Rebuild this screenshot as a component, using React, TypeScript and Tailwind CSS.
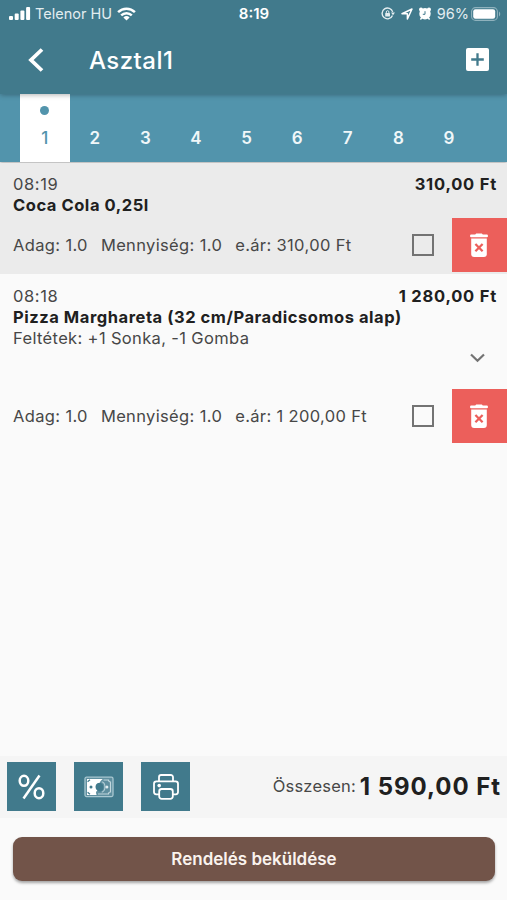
import { useState } from "react";
import type { ReactNode } from "react";

interface OrderItem {
  id: number;
  time: string;
  name: string;
  total: string;
  toppings?: string;
  portion: string;
  quantity: string;
  unitPrice: string;
}

const items: OrderItem[] = [
  {
    id: 1,
    time: "08:19",
    name: "Coca Cola 0,25l",
    total: "310,00 Ft",
    portion: "1.0",
    quantity: "1.0",
    unitPrice: "310,00 Ft",
  },
  {
    id: 2,
    time: "08:18",
    name: "Pizza Marghareta (32 cm/Paradicsomos alap)",
    total: "1 280,00 Ft",
    toppings: "+1 Sonka, -1 Gomba",
    portion: "1.0",
    quantity: "1.0",
    unitPrice: "1 200,00 Ft",
  },
];

const seats = [1, 2, 3, 4, 5, 6, 7, 8, 9];

function StatusBar() {
  return (
    <div className="flex h-[27px] items-center justify-between pl-[9px] pr-[7px] text-[15px] text-[#e3edf0]">
      <div className="flex w-[160px] items-center">
        <svg width="22" height="13" viewBox="0 0 22 13" fill="white">
          <rect x="0" y="9" width="4" height="4" rx="1" />
          <rect x="5.7" y="6.5" width="4" height="6.5" rx="1" />
          <rect x="11.4" y="3.5" width="4" height="9.5" rx="1" />
          <rect x="17.1" y="0" width="4" height="13" rx="1" />
        </svg>
        <span className="ml-1 whitespace-nowrap text-[14.5px]">Telenor HU</span>
        <svg className="ml-[5px]" width="19" height="14" viewBox="0 0 19 14" fill="none" stroke="white" strokeWidth="2.5">
          <path d="M1.1 5.1a12 12 0 0 1 16.8 0" />
          <path d="M4.2 8.3a7.6 7.6 0 0 1 10.6 0" />
          <path d="M9.5 13.6 6.4 10.5a4.5 4.5 0 0 1 6.2 0Z" fill="white" stroke="none" />
        </svg>
      </div>
      <span className="-ml-0.5 pt-0.5 font-semibold text-white">8:19</span>
      <div className="-mr-px flex w-[160px] items-center justify-end">
        <svg width="14" height="13" viewBox="0 0 14 13" fill="none" stroke="currentColor" strokeWidth="1.4">
          <path d="M11.5 8.5a5.4 5.4 0 1 1 .2-3.6" />
          <path d="M10 5.5h4l-2 2.8Z" fill="currentColor" stroke="none" />
          <rect x="4.2" y="5.9" width="4.8" height="3.6" rx=".5" fill="currentColor" stroke="none" />
          <path d="M5.3 6V5a1.3 1.3 0 0 1 2.6 0v1" strokeWidth="1" />
        </svg>
        <svg className="ml-1.5" width="12" height="12" viewBox="0 0 12 12" fill="none" stroke="white" strokeWidth="1.5" strokeLinejoin="round">
          <path d="M1 5.8 11 1 6.4 11V5.8Z" />
        </svg>
        <svg className="ml-1.5" width="12" height="13" viewBox="0 0 12 13" fill="white">
          <circle cx="6" cy="6.8" r="5.7" />
          <circle cx="2" cy="2.4" r="2" />
          <circle cx="10" cy="2.4" r="2" />
          <path d="m1.4 12.5 2-2.5M10.6 12.5l-2-2.5" stroke="white" strokeWidth="1.5" />
          <path d="M6 4.2v3.1H3.8" fill="none" stroke="#417a8c" strokeWidth="1" />
        </svg>
        <span className="ml-1.5 text-[14.5px]">96%</span>
        <svg className="ml-0.5" width="30" height="14" viewBox="0 0 30 14">
          <rect x=".6" y=".6" width="25.8" height="12.8" rx="4" fill="none" stroke="#8fb2bd" strokeWidth="1.1" />
          <rect x="2.2" y="2.2" width="22" height="9.6" rx="2.2" fill="white" />
          <path d="M28 4.5c1.6.8 1.6 4.2 0 5Z" fill="#8fb2bd" />
        </svg>
      </div>
    </div>
  );
}

function DeleteIcon() {
  return (
    <svg className="mr-px" width="20" height="24" viewBox="0 0 20 24">
      <path d="M6.2 1.6 7.2.6h5.6l1 1h4.1q1 0 1 1v1q0 .7-1 .7H2.1q-1 0-1-.7v-1q0-1 1-1Z" fill="white" />
      <path d="M2.2 5.4h15.6V21a3 3 0 0 1-3 3H5.2a3 3 0 0 1-3-3Z" fill="white" />
      <path d="m6.4 11 7.2 7.2M13.6 11l-7.2 7.2" stroke="#ec5f5b" strokeWidth="2.3" />
    </svg>
  );
}

function CashIcon() {
  return (
    <svg width="30" height="22" viewBox="0 0 30 22">
      <rect x="1" y="1.2" width="28" height="19.4" rx="1.5" fill="#5f8f9f" stroke="#a9c8d1" strokeWidth="1.3" />
      <path d="M3 3h15.8c-1 1.2-2.6 1.7-2.6 3 0 1.2-1.6 1.4-2.6 2.8-1.4 2-.6 4.2.2 5.2-1 1-1.8 1.6-1.8 3l.6 1.9H3Z" fill="white" />
      <path d="M3.6 5.8 6 3.8M3.6 16.2 6 18.2" stroke="#417a8c" strokeWidth="1.2" />
      <circle cx="7" cy="11" r="1.5" fill="#417a8c" />
      <path d="M12 8.8c1.6-3.2 6.8-2.8 7.4 1.6.4 4.6-3 6.2-5.8 4.4-2.1-1.3-2.6-4-1.6-6Z" fill="#417a8c" />
      <path d="M19.5 4h5a2 2 0 0 0 2 2v10a2 2 0 0 0-2 2H14" fill="none" stroke="#c2d8de" strokeWidth="1.2" />
      <path d="M17.8 5.8c4 1 4.4 9 0 10.4" fill="none" stroke="#b3ced6" strokeWidth="1.1" />
      <circle cx="22.9" cy="11" r="1.5" fill="#e1edf0" />
    </svg>
  );
}

function PrinterIcon() {
  return (
    <svg width="26" height="26" viewBox="0 0 26 26" fill="none" stroke="white" strokeWidth="1.8" strokeLinejoin="round">
      <path d="M6 7.3V3.2A2.2 2.2 0 0 1 8.2 1h9.6A2.2 2.2 0 0 1 20 3.2v4.1" />
      <path d="M6 20.3H3.2A2.2 2.2 0 0 1 1 18.1v-8.4a2.4 2.4 0 0 1 2.4-2.4h19.2A2.4 2.4 0 0 1 25 9.7v8.4a2.2 2.2 0 0 1-2.2 2.2H20" />
      <path d="M8.6 15h8.8a2.4 2.4 0 0 1 2.4 2.4v5a2.4 2.4 0 0 1-2.4 2.4H8.6a2.4 2.4 0 0 1-2.4-2.4v-5A2.4 2.4 0 0 1 8.6 15Z" />
      <circle cx="6.2" cy="11.6" r="1.8" fill="white" stroke="none" />
    </svg>
  );
}

function SquareButton({ label, children }: { label: string; children: ReactNode }) {
  return (
    <button aria-label={label} className="flex size-[49px] items-center justify-center bg-[#417a8c]">
      {children}
    </button>
  );
}

function ItemRow({ item, highlighted }: { item: OrderItem; highlighted: boolean }) {
  const [checked, setChecked] = useState(false);

  return (
    <div
      className={`pb-0.5 text-[16.5px] leading-[21px] tracking-[0.35px] text-[#474747] ${
        highlighted ? "bg-[#ebebeb] pt-[11px]" : "pt-3"
      }`}
    >
      <div className="pl-[13px] pr-[10px]">
        <div className="flex justify-between">
          <span className="tracking-[0.6px]">{item.time}</span>
          <span className="font-bold tracking-[0.78px] text-[#202020]">{item.total}</span>
        </div>
        <div className="whitespace-nowrap font-bold tracking-[0.55px] text-[#202020]">{item.name}</div>
        {item.toppings && <div>Feltétek: {item.toppings}</div>}
      </div>

      {item.toppings && (
        <div className="flex h-[38px] justify-end pr-[22px] pt-[4px]">
          <svg width="15" height="10" viewBox="0 0 15 10" fill="none" stroke="#737373" strokeWidth="2.2">
            <path d="m1 1.5 6.5 6.3L14 1.5" />
          </svg>
        </div>
      )}

      <div className="mt-0.5 flex h-[54px] items-center pl-[13px]">
        <div className="flex flex-1 gap-[13px] whitespace-nowrap">
          <span>Adag: {item.portion}</span>
          <span>Mennyiség: {item.quantity}</span>
          <span>e.ár: {item.unitPrice}</span>
        </div>
        <button
          role="checkbox"
          aria-checked={checked}
          aria-label={item.name}
          onClick={() => setChecked(!checked)}
          className={`mr-[18px] size-[22px] border-2 border-[#737373] ${checked ? "bg-[#737373]" : ""}`}
        />
        <button aria-label="Törlés" className="flex h-[54px] w-[55px] items-center justify-center bg-[#ec5f5b]">
          <DeleteIcon />
        </button>
      </div>
    </div>
  );
}

export default function App() {
  const [seat, setSeat] = useState(1);

  return (
    <div className="flex h-[900px] w-[507px] flex-col overflow-hidden bg-[#fafafa] font-['Inter',sans-serif]">
      <header className="relative z-10 bg-[#417a8c] shadow-[0_1px_5px_rgba(0,0,0,0.3)]">
        <StatusBar />
        <div className="flex h-[67px] items-center pb-[2px] pl-[28px] pr-[18px]">
          <svg width="16" height="24" viewBox="0 0 16 24" fill="none" stroke="white" strokeWidth="3.8">
            <path d="M14 1.5 3 12l11 10.5" />
          </svg>
          <h1 className="ml-[45px] flex-1 pt-0.5 text-2xl font-medium tracking-[0.45px] text-white">Asztal1</h1>
          <svg width="23" height="23" viewBox="0 0 23 23">
            <rect width="23" height="23" rx="2" fill="white" />
            <path d="M11.5 5.2v12.6M5.2 11.5h12.6" stroke="#417a8c" strokeWidth="2.3" />
          </svg>
        </div>
      </header>

      {/* Seats */}
      <nav className="flex h-[68px] shrink-0 bg-[#5294ac] pl-5 shadow-[0_1px_3px_rgba(0,0,0,0.35)]">
        {seats.map((n) => (
          <button
            key={n}
            onClick={() => setSeat(n)}
            className={`flex flex-col items-center text-[17px] font-semibold ${
              n === seat ? "w-[49.5px] bg-white text-[#5294ac]" : "w-[50.6px] text-[#f0f7f9]"
            }`}
          >
            <span className={`mt-3 size-[9px] rounded-full ${n === 1 ? "bg-[#5294ac]" : ""}`} />
            <span className={`mt-[11px] ${n === seat ? "font-medium" : ""}`}>{n}</span>
          </button>
        ))}
      </nav>

      <main className="flex-1 pt-px">
        {items.map((item, i) => (
          <ItemRow key={item.id} item={item} highlighted={i === 0} />
        ))}
      </main>

      {/* Actions and total */}
      <div className="flex h-[62px] items-center gap-[18px] bg-[#f5f5f5] pb-px pl-[7px] pr-1.5">
        <SquareButton label="Kedvezmény">
          <svg width="27" height="26" viewBox="0 0 27 26" fill="none" stroke="white" strokeWidth="2.5">
            <ellipse cx="6" cy="6.8" rx="4.3" ry="5" />
            <ellipse cx="21" cy="19.2" rx="4.3" ry="5" />
            <path d="M21.5 1.5 5.5 24.5" />
          </svg>
        </SquareButton>
        <SquareButton label="Fizetés">
          <CashIcon />
        </SquareButton>
        <SquareButton label="Nyomtatás">
          <PrinterIcon />
        </SquareButton>
        <div className="flex flex-1 items-center justify-end gap-1 whitespace-nowrap">
          <span className="text-[16.5px] tracking-[0.2px] text-[#474747]">Összesen:</span>
          <span className="text-2xl font-bold tracking-[0.95px] text-[#202020]">1 590,00 Ft</span>
        </div>
      </div>

      <div className="h-[82px] pl-[13px] pr-3 pt-[19px]">
        <button className="h-11 w-full rounded-[9px] bg-[#725449] pt-px text-[17px] font-semibold text-[#faf3ee] shadow-[0_2px_3px_rgba(0,0,0,0.35)]">
          Rendelés beküldése
        </button>
      </div>
    </div>
  );
}
